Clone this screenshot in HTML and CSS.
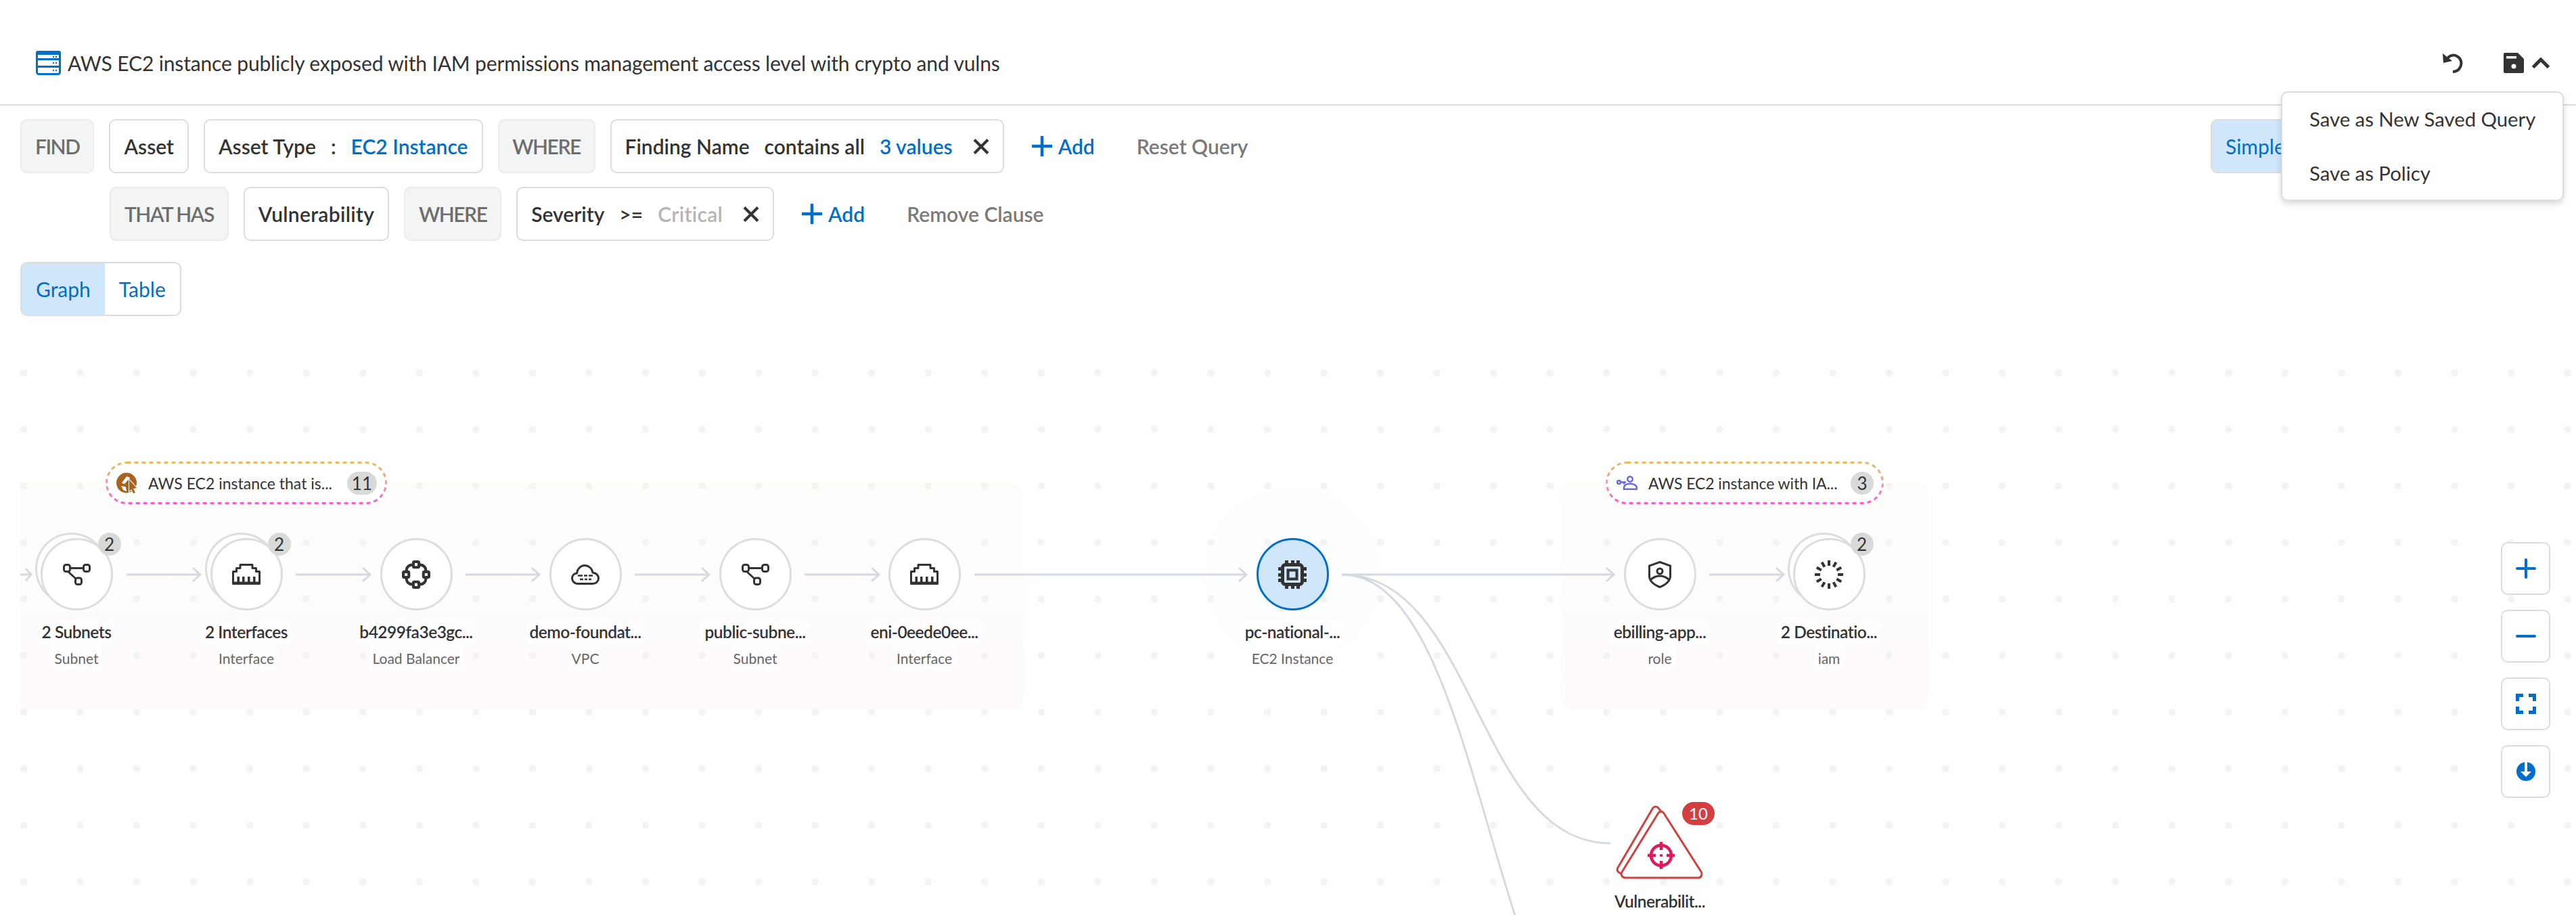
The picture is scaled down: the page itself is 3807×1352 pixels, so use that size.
FILE: index.html
```html
<!DOCTYPE html>
<html lang="en">

<head>
	<meta charset="UTF-8">
	<meta name="viewport" content="width=device-width, initial-scale=1.0">
	<title>Investigate</title>
	<link rel="stylesheet" href="styles.css">
</head>

<body>
	<div class="header">
		<svg class="title-icon" viewBox="0 0 37 36">
			<rect x="1.5" y="1.5" width="34" height="33" rx="3" fill="#fff" stroke="#006fcc" stroke-width="3"/>
			<path d="M1 12.5h35M1 23.5h35" stroke="#006fcc" stroke-width="3"/>
			<path d="M0 3a3 3 0 0 1 3-3h31a3 3 0 0 1 3 3v3H0z" fill="#006fcc"/>
			<path d="M25 8h2v2h-2zM29 8h2v2h-2zM25 17h2v2h-2zM29 17h2v2h-2zM25 28h2v2h-2zM29 28h2v2h-2z" fill="#006fcc"/>
		</svg>
		<div class="title">AWS EC2 instance publicly exposed with IAM permissions management access level with crypto and vulns</div>
		<div class="header-actions">
			<svg class="icon-undo" viewBox="0 0 30 30">
				<path d="M6 10C9 4 16 2 21 5c6 3 8 10 5 16-2 4-6 7-11 7" fill="none" stroke="#333" stroke-width="4"/>
				<path d="M0 1l1 14 13-3z" fill="#333"/>
			</svg>
			<svg class="icon-save" viewBox="0 0 30 30">
				<path d="M2 0h19l9 9v19a2 2 0 0 1-2 2H2a2 2 0 0 1-2-2V2a2 2 0 0 1 2-2z" fill="#333"/>
				<rect x="4" y="5" width="15" height="3.5" fill="#fff"/>
				<circle cx="15" cy="20" r="3.5" fill="#fff"/>
			</svg>
			<svg class="icon-chevron" viewBox="0 0 28 17">
				<path d="M2.5 14.5L14 3l11.5 11.5" fill="none" stroke="#333" stroke-width="5"/>
			</svg>
		</div>
		<div class="menu">
			<div class="menu-item">Save as New Saved Query</div>
			<div class="menu-item">Save as Policy</div>
		</div>
	</div>

	<div class="query">
		<div class="query-row">
			<div class="chip chip-key">FIND</div>
			<div class="chip">Asset</div>
			<div class="chip">Asset Type <span class="op">:</span> <span class="val">EC2 Instance</span></div>
			<div class="chip chip-key chip-where">WHERE</div>
			<div class="chip">Finding Name <span class="op">contains all</span> <span class="val">3 values</span>
				<svg class="icon-x" viewBox="0 0 24 23"><path d="M2 1.5l20 20M22 1.5l-20 20" stroke="#333" stroke-width="4" fill="none"/></svg>
			</div>
			<div class="add"><svg class="icon-plus" viewBox="0 0 30 30"><path d="M15 0v30M0 15h30" stroke="#006fcc" stroke-width="4.5"/></svg>Add</div>
			<div class="link">Reset Query</div>
			<div class="mode">
				<div class="mode-item mode-on">Simple</div>
				<div class="mode-item">Advanced</div>
			</div>
		</div>
		<div class="query-row query-sub">
			<div class="chip chip-key">THAT HAS</div>
			<div class="chip chip-spaced">Vulnerability</div>
			<div class="chip chip-key chip-where">WHERE</div>
			<div class="chip">Severity <span class="op">&gt;=</span> <span class="val-muted">Critical</span>
				<svg class="icon-x" viewBox="0 0 24 23"><path d="M2 1.5l20 20M22 1.5l-20 20" stroke="#333" stroke-width="4" fill="none"/></svg>
			</div>
			<div class="add"><svg class="icon-plus" viewBox="0 0 30 30"><path d="M15 0v30M0 15h30" stroke="#006fcc" stroke-width="4.5"/></svg>Add</div>
			<div class="link">Remove Clause</div>
		</div>
		<div class="tabs">
			<div class="tab tab-on">Graph</div>
			<div class="tab">Table</div>
		</div>
	</div>

	<div class="canvas">
		<div class="panel panel-left"></div>
		<div class="panel panel-right"></div>
		<div class="halo"></div>

		<svg class="edges" viewBox="0 0 3807 852">
			<g fill="none" stroke="#d5d9e0" stroke-width="3">
				<path d="M30 349H46M38 340l8 9-8 9"/>
				<path d="M187 349H296M285 339l11 10-11 10"/>
				<path d="M437 349H547M536 339l11 10-11 10"/>
				<path d="M688 349H797M786 339l11 10-11 10"/>
				<path d="M938 349H1048M1037 339l11 10-11 10"/>
				<path d="M1189 349H1299M1288 339l11 10-11 10"/>
				<path d="M1440 349H1842M1831 339l11 10-11 10"/>
				<path d="M1983 349H2385M2374 339l11 10-11 10"/>
				<path d="M2526 349H2636M2625 339l11 10-11 10"/>
				<path d="M1983 349C2181 349 2182 746 2380 746"/>
				<path d="M1983 349C2200 349 2200 1100 2420 1100"/>
			</g>
		</svg>

		<div class="group group-left">
			<svg class="group-border" viewBox="0 0 416 63">
				<defs>
					<linearGradient id="dash" x1="0" y1="0" x2="0" y2="1">
						<stop offset="0" stop-color="#e8bb5c"/>
						<stop offset="0.5" stop-color="#f59a9a"/>
						<stop offset="1" stop-color="#f45cd0"/>
					</linearGradient>
				</defs>
				<rect x="1.500" y="1.500" width="413" height="60" rx="30" fill="none" stroke="url(#dash)" stroke-width="3" stroke-dasharray="6 5"/>
			</svg>
			<svg class="group-icon" viewBox="0 0 31 31">
				<circle cx="15" cy="15.500" r="15" fill="#a9631f"/>
				<path d="M15.300 5.700L20.300 8 12 17 7.700 15.700zM7 20l6.700 1.300 1.600 6.700-5-1.700z" fill="#fff"/>
				<path d="M19 11l11 12-5 1 3 6-3 1-3-6-3 3z" fill="#a9631f" stroke="#fff" stroke-width="2" paint-order="stroke"/>
			</svg>
			<span class="group-text">AWS EC2 instance that is...</span>
			<span class="count">11</span>
		</div>
		<div class="group group-right">
			<svg class="group-border" viewBox="0 0 411 63">
				<rect x="1.500" y="1.500" width="408" height="60" rx="30" fill="none" stroke="url(#dash)" stroke-width="3" stroke-dasharray="6 5"/>
			</svg>
			<svg class="group-icon group-icon-iam" viewBox="0 0 31 21">
				<circle cx="3.500" cy="9.500" r="2.500" fill="none" stroke="#6666ee" stroke-width="2.500"/>
				<path d="M6 9.500h8M11 9.500v3" fill="none" stroke="#6666ee" stroke-width="2.500"/>
				<circle cx="20" cy="5" r="3.800" fill="none" stroke="#6666ee" stroke-width="2.500"/>
				<path d="M11 19.800v-2c0-4 4-6 9-6s10 2 10 6v2z" fill="none" stroke="#6666ee" stroke-width="2.500"/>
			</svg>
			<span class="group-text">AWS EC2 instance with IA...</span>
			<span class="count">3</span>
		</div>

		<div class="node node-1">
			<div class="circle stacked">
				<svg class="icon-subnet" viewBox="0 0 41 32"><g fill="none" stroke="#333" stroke-width="3"><rect x="1.5" y="1.5" width="9" height="10" rx="3"/><rect x="30.5" y="1.5" width="9" height="10" rx="3"/><rect x="18.5" y="21" width="9" height="9.5" rx="3"/><path d="M11 6.5h19M8 12l11 10"/></g></svg>
				<span class="badge">2</span>
			</div>
			<div class="name">2 Subnets</div>
			<div class="sub">Subnet</div>
		</div>
		<div class="node node-2">
			<div class="circle stacked">
				<svg class="icon-port" viewBox="0 0 42 31"><path d="M1.500 29.500V11.500H6.500V6.500H12V1.500H30V6.500H35.500V11.500H40.500V29.500z" fill="none" stroke="#333" stroke-width="3" stroke-linejoin="round"/><path d="M1 26.500h40v4H1zM7.500 19h3.500v8H7.500zM15 19h3.500v8H15zM23 19h3.500v8H23zM31 19h3.500v8H31z" fill="#333"/></svg>
				<span class="badge">2</span>
			</div>
			<div class="name">2 Interfaces</div>
			<div class="sub">Interface</div>
		</div>
		<div class="node node-3">
			<div class="circle">
				<svg class="icon-square" viewBox="0 0 41 41"><rect x="6.500" y="6.500" width="28" height="28" rx="8" fill="none" stroke="#333" stroke-width="4"/><g fill="#fff" stroke="#333" stroke-width="4"><rect x="16.500" y="2" width="8" height="8" rx="1.500"/><rect x="16.500" y="31" width="8" height="8" rx="1.500"/><rect x="2" y="16.500" width="8" height="8" rx="1.500"/><rect x="31" y="16.500" width="8" height="8" rx="1.500"/></g></svg>
			</div>
			<div class="name">b4299fa3e3gc...</div>
			<div class="sub">Load Balancer</div>
		</div>
		<div class="node node-4">
			<div class="circle">
				<svg class="icon-cloud" viewBox="0 0 42 30"><path d="M10 28.500C4.500 28.500 1.500 24 1.500 20.500 1.500 16 5 13 8.500 13 9 7 14 1.500 20 1.500c6 0 11 4.500 12 10.500 5 1 8.500 4 8.500 8.500 0 4.500-3.500 8-8.500 8z" fill="none" stroke="#333" stroke-width="3"/><path d="M10 16.500h7M19 16.500h5M26 16.500h6M13 22h5M20 22h4M26 22h4" stroke="#333" stroke-width="2.500"/></svg>
			</div>
			<div class="name">demo-foundat...</div>
			<div class="sub">VPC</div>
		</div>
		<div class="node node-5">
			<div class="circle">
				<svg class="icon-subnet" viewBox="0 0 41 32"><g fill="none" stroke="#333" stroke-width="3"><rect x="1.5" y="1.5" width="9" height="10" rx="3"/><rect x="30.5" y="1.5" width="9" height="10" rx="3"/><rect x="18.5" y="21" width="9" height="9.5" rx="3"/><path d="M11 6.5h19M8 12l11 10"/></g></svg>
			</div>
			<div class="name">public-subne...</div>
			<div class="sub">Subnet</div>
		</div>
		<div class="node node-6">
			<div class="circle">
				<svg class="icon-port" viewBox="0 0 42 31"><path d="M1.500 29.500V11.500H6.500V6.500H12V1.500H30V6.500H35.500V11.500H40.500V29.500z" fill="none" stroke="#333" stroke-width="3" stroke-linejoin="round"/><path d="M1 26.500h40v4H1zM7.500 19h3.500v8H7.500zM15 19h3.500v8H15zM23 19h3.500v8H23zM31 19h3.500v8H31z" fill="#333"/></svg>
			</div>
			<div class="name">eni-0eede0ee...</div>
			<div class="sub">Interface</div>
		</div>
		<div class="node node-7">
			<div class="circle circle-active">
				<svg class="icon-square" viewBox="0 0 42 42"><path d="M10 0h5v6h-5zM19 0h5v6h-5zM27 0h5v6h-5zM10 36h5v6h-5zM19 36h5v6h-5zM27 36h5v6h-5zM0 10h6v5H0zM0 19h6v5H0zM0 27h6v5H0zM36 10h6v5h-6zM36 19h6v5h-6zM36 27h6v5h-6z" fill="#333"/><rect x="6.500" y="6.500" width="29" height="29" rx="4" fill="none" stroke="#333" stroke-width="5"/><rect x="14.500" y="14.500" width="13" height="13" fill="none" stroke="#333" stroke-width="4"/></svg>
			</div>
			<div class="name">pc-national-...</div>
			<div class="sub">EC2 Instance</div>
		</div>
		<div class="node node-8">
			<div class="circle">
				<svg class="icon-shield" viewBox="0 0 34 40"><path d="M17 1.500L32.500 7v15c0 8-7 13-15.500 16.500C8.500 35 1.500 30 1.500 22V7z" fill="none" stroke="#333" stroke-width="3"/><circle cx="17" cy="15" r="4" fill="none" stroke="#333" stroke-width="3"/><path d="M3 28c4-4 9-6 14-6s10 2 14 6" fill="none" stroke="#333" stroke-width="3"/></svg>
			</div>
			<div class="name">ebilling-app...</div>
			<div class="sub">role</div>
		</div>
		<div class="node node-9">
			<div class="circle stacked">
				<svg class="icon-square" viewBox="0 0 42 42">
					<g stroke="#333" stroke-width="4">
						<path id="tick" d="M21 0v8"/>
						<use href="#tick" transform="rotate(30 21 21)"/>
						<use href="#tick" transform="rotate(60 21 21)"/>
						<use href="#tick" transform="rotate(90 21 21)"/>
						<use href="#tick" transform="rotate(120 21 21)"/>
						<use href="#tick" transform="rotate(150 21 21)"/>
						<use href="#tick" transform="rotate(180 21 21)"/>
						<use href="#tick" transform="rotate(210 21 21)"/>
						<use href="#tick" transform="rotate(240 21 21)"/>
						<use href="#tick" transform="rotate(270 21 21)"/>
						<use href="#tick" transform="rotate(300 21 21)"/>
						<use href="#tick" transform="rotate(330 21 21)"/>
					</g>
				</svg>
				<span class="badge">2</span>
			</div>
			<div class="name">2 Destinatio...</div>
			<div class="sub">iam</div>
		</div>
		<div class="node node-10">
			<div class="triangle">
				<svg class="icon-triangle" viewBox="0 0 130 110">
					<g fill="#fff" stroke="#d04040" stroke-width="3" stroke-linejoin="round">
						<path d="M55 3.500c2-2 6-2 7.500 0l4 5L14 98.500c-2 3-6 3-9 1-3-2-3.500-5-2-7.500z"/>
						<path d="M63 11c2-2.500 5.500-2.500 7.500 0L126 98c2.500 4 0 9-4 9H14c-5 0-7-5-5-8.500z"/>
					</g>
					<g fill="none" stroke="#e0185e">
						<circle cx="67" cy="74" r="15" stroke-width="4.500"/>
						<path d="M67 54v12M67 82v12M47 74h12M75 74h12" stroke-width="4.500"/>
						<path d="M65 74h4" stroke-width="3.500"/>
					</g>
				</svg>
				<span class="badge badge-red">10</span>
			</div>
			<div class="name">Vulnerabilit...</div>
		</div>

		<div class="controls">
			<div class="control"><svg class="control-icon" viewBox="0 0 30 30"><path d="M15 2v26M2 15h26" stroke="#006fcc" stroke-width="4" stroke-linecap="round"/></svg></div>
			<div class="control"><svg class="control-icon" viewBox="0 0 30 30"><path d="M2 15h26" stroke="#006fcc" stroke-width="4" stroke-linecap="round"/></svg></div>
			<div class="control"><svg class="control-icon" viewBox="0 0 30 30"><path d="M11 2.500H2.500V11M19 2.500h8.500V11M11 27.500H2.500V19M19 27.500h8.500V19" fill="none" stroke="#006fcc" stroke-width="5"/></svg></div>
			<div class="control"><svg class="control-icon" viewBox="0 0 30 30"><circle cx="15" cy="15" r="14" fill="#006fcc"/><path d="M13 0h4v15h6l-8 8-8-8h6z" fill="#fff"/></svg></div>
		</div>
	</div>
</body>

</html>
```
FILE: styles.css
```css
body
{
	margin: 0;
	width: 3807px;
	height: 1352px;
	overflow: hidden;
	background-color: #ffffff;
	color: #333333;
	font-family: 'Lato', 'Liberation Sans', sans-serif;
	font-size: 30px;
}

.header
{
	position: relative;
	display: flex;
	align-items: center;
	gap: 10px;
	height: 122px;
	padding: 32px 38px 0 53px;
	border-bottom: 2px solid #dddddd;
}

.title-icon
{
	width: 37px;
	height: 36px;
	flex: none;
}

.title
{
	letter-spacing: -0.15px;
}

.header-actions
{
	display: flex;
	align-items: center;
	margin-left: auto;
}

.icon-undo
{
	width: 30px;
	height: 30px;
	margin-right: 60px;
}

.icon-save
{
	width: 30px;
	height: 30px;
	margin-right: 11px;
}

.icon-chevron
{
	width: 28px;
	height: 17px;
}

.menu
{
	position: absolute;
	top: 135px;
	left: 3371px;
	z-index: 5;
	width: 418px;
	height: 162px;
	box-sizing: border-box;
	padding: 0 0 0 40px;
	background-color: #ffffff;
	border: 2px solid #dddddd;
	border-radius: 10px;
	box-shadow: 0 4px 10px rgba(0, 0, 0, 0.15);
	font-size: 29.3px;
}

.menu-item
{
	height: 80px;
	line-height: 78px;
}

.query
{
	padding: 20px 30px 0;
}

.query-row
{
	display: flex;
	align-items: center;
	gap: 22px;
	height: 80px;
	margin-bottom: 20px;
}

.query-sub
{
	margin-left: 132px;
	margin-bottom: 31px;
}

.chip
{
	display: flex;
	align-items: center;
	height: 80px;
	box-sizing: border-box;
	padding: 0 20px;
	background-color: #ffffff;
	border: 2px solid #dddddd;
	border-radius: 10px;
	font-weight: 600;
	white-space: nowrap;
}

.chip-key
{
	background-color: #f3f5f5;
	border-color: #eaecec;
	color: #6e6e6e;
	letter-spacing: -1.5px;
}

.chip-where
{
	width: 144px;
	justify-content: center;
	padding: 0;
}

.chip-spaced
{
	letter-spacing: 0.3px;
}

.op
{
	margin: 0 22px;
}

.val
{
	color: #006fcc;
}

.val-muted
{
	color: #b5b5b5;
	letter-spacing: 0.3px;
}

.icon-x
{
	width: 24px;
	height: 23px;
	margin-left: 30px;
}

.add
{
	display: flex;
	align-items: center;
	gap: 9px;
	color: #006fcc;
	font-weight: 600;
	margin-left: 19px;
}

.icon-plus
{
	width: 30px;
	height: 30px;
}

.link
{
	color: #7a7a7a;
	font-weight: 600;
	margin-left: 40px;
}

.mode
{
	display: flex;
	flex: none;
	width: 510px;
	margin-left: auto;
	height: 80px;
	border: 2px solid #dddddd;
	border-radius: 10px;
	box-sizing: border-box;
	color: #006fcc;
}

.mode-item
{
	display: flex;
	align-items: center;
	padding: 0 20px;
}

.mode-on
{
	background-color: #cfe6fb;
	border-radius: 8px 0 0 8px;
}

.tabs
{
	display: flex;
	width: fit-content;
	height: 80px;
	box-sizing: border-box;
	border: 2px solid #dddddd;
	border-radius: 10px;
	color: #006fcc;
}

.tab
{
	display: flex;
	align-items: center;
	padding: 0 21px;
}

.tab-on
{
	background-color: #cfe6fb;
	border-radius: 8px 0 0 8px;
}

.canvas
{
	position: relative;
	height: 852px;
	margin-top: 33px;
	background-image: radial-gradient(circle, #f3f3f3 5px, transparent 5.5px);
	background-size: 83.55px 83.55px;
	background-position: -6.775px 9.2px;
}

.panel
{
	position: absolute;
	top: 213px;
	height: 335px;
	border-radius: 0 20px 20px 0;
	background-image: linear-gradient(180deg, rgba(254, 246, 232, 0.22) 0%, rgba(250, 230, 250, 0.2) 100%);
}

.panel-left
{
	left: 30px;
	width: 1483px;
}

.panel-right
{
	left: 2307px;
	width: 543px;
	border-radius: 20px;
}

.halo
{
	position: absolute;
	left: 1779px;
	top: 218px;
	width: 262px;
	height: 262px;
	border-radius: 50%;
	background-color: rgba(235, 245, 255, 0.12);
}

.edges
{
	position: absolute;
	left: 0;
	top: 0;
	width: 3807px;
	height: 852px;
}

.group
{
	position: absolute;
	top: 182px;
	display: flex;
	align-items: center;
	box-sizing: border-box;
	height: 63px;
	padding: 0 15px 0 16px;
	background-color: #ffffff;
	border-radius: 30px;
	font-size: 23px;
}

.group-border
{
	position: absolute;
	left: 0;
	top: 0;
	width: 100%;
	height: 100%;
}

.group-left
{
	left: 156px;
	width: 416px;
}

.group-right
{
	left: 2373px;
	width: 411px;
	letter-spacing: -0.1px;
}

.group-icon
{
	position: relative;
	width: 31px;
	height: 31px;
	margin-right: 16px;
	flex: none;
}

.group-icon-iam
{
	height: 21px;
}

.group-text
{
	position: relative;
	flex: 1;
	white-space: nowrap;
}

.count
{
	position: relative;
	min-width: 34px;
	height: 34px;
	padding: 0 7px;
	box-sizing: border-box;
	border-radius: 17px;
	background-color: #d8dada;
	font-size: 26px;
	line-height: 34px;
	text-align: center;
}

.node
{
	position: absolute;
	top: 295px;
	width: 240px;
	display: flex;
	flex-direction: column;
	align-items: center;
}

.node-1 { left: -7px; }
.node-2 { left: 244px; }
.node-3 { left: 495px; }
.node-4 { left: 745px; }
.node-5 { left: 996px; }
.node-6 { left: 1246px; }
.node-7 { left: 1790px; }
.node-8 { left: 2333px; }
.node-9 { left: 2583px; }
.node-10 { left: 2333px; top: 690px; }

.circle
{
	position: relative;
	display: flex;
	align-items: center;
	justify-content: center;
	width: 107px;
	height: 107px;
	box-sizing: border-box;
	background-color: #ffffff;
	border: 3px solid #dddddd;
	border-radius: 50%;
}

.circle-active
{
	background-color: #cfe6fb;
	border-color: #006fcc;
}

.stacked
{
	box-shadow: -8px -8px 0 -3px #ffffff, -8px -8px 0 0 #dddddd;
}

.badge
{
	position: absolute;
	top: -11px;
	right: -15px;
	min-width: 34px;
	height: 34px;
	box-sizing: border-box;
	border-radius: 17px;
	background-color: #d8dada;
	font-size: 26px;
	line-height: 34px;
	text-align: center;
}

.badge-red
{
	top: -5px;
	right: -16px;
	width: 48px;
	background-color: #d33e3e;
	color: #ffffff;
	font-size: 24px;
}

.icon-subnet
{
	width: 41px;
	height: 32px;
}

.icon-port
{
	width: 42px;
	height: 31px;
}

.icon-square
{
	width: 42px;
	height: 42px;
}

.icon-cloud
{
	width: 42px;
	height: 30px;
}

.icon-shield
{
	width: 34px;
	height: 40px;
}

.triangle
{
	position: relative;
	width: 130px;
	height: 110px;
}

.icon-triangle
{
	display: block;
	width: 130px;
	height: 110px;
}

.name
{
	margin-top: 15px;
	padding: 0 5px;
	height: 36px;
	line-height: 34px;
	font-size: 24.500px;
	font-weight: 600;
	letter-spacing: -0.5px;
	background-color: rgba(255, 255, 255, 0.6);
	border-radius: 6px;
	white-space: nowrap;
}

.sub
{
	padding: 0 5px;
	height: 38px;
	line-height: 39px;
	font-size: 21px;
	color: #666666;
	background-color: rgba(255, 255, 255, 0.6);
	border-radius: 6px;
}

.controls
{
	position: absolute;
	top: 301px;
	right: 38px;
	display: flex;
	flex-direction: column;
	gap: 22px;
}

.control
{
	display: flex;
	align-items: center;
	justify-content: center;
	width: 73px;
	height: 78px;
	box-sizing: border-box;
	background-color: #ffffff;
	border: 2px solid #dddddd;
	border-radius: 10px;
}

.control-icon
{
	width: 30px;
	height: 30px;
}
```
